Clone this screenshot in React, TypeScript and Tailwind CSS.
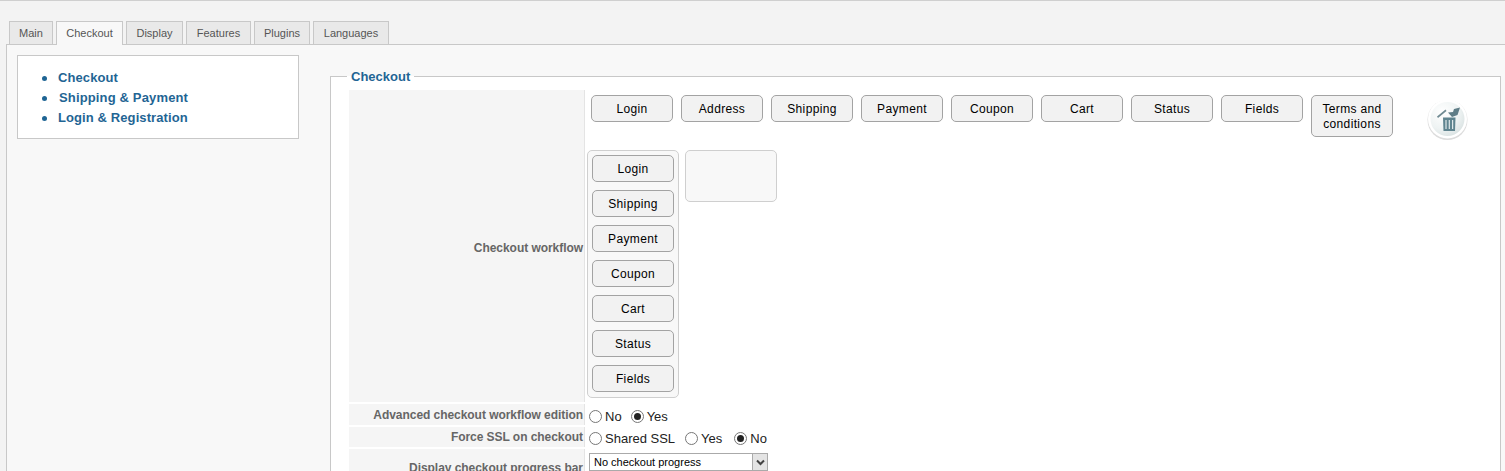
import React from "react";

const tabs = ["Main", "Checkout", "Display", "Features", "Plugins", "Languages"];
const tabWidths = ["w-[44px]", "w-[67px]", "w-[57px]", "w-[65px]", "w-[56px]", "w-[76px]"];
const topButtons = ["Login", "Address", "Shipping", "Payment", "Coupon", "Cart", "Status", "Fields"];
const sortButtons = ["Login", "Shipping", "Payment", "Coupon", "Cart", "Status", "Fields"];

function Btn({ label }: { label: string }) {
  return (
    <div className="flex h-[27px] w-[82px] shrink-0 items-center justify-center rounded-[5px] border border-[#a3a3a3] bg-[#f2f2f2] text-[12px] tracking-[0.35px] text-black">
      {label}
    </div>
  );
}

function Radio({ checked }: { checked?: boolean }) {
  return (
    <span className="mr-[3px] flex h-[13px] w-[13px] shrink-0 items-center justify-center rounded-full border border-[#777] bg-white">
      {checked && <span className="h-[7px] w-[7px] rounded-full bg-[#222]" />}
    </span>
  );
}

function RadioItem({ label, checked, className = "" }: { label: string; checked?: boolean; className?: string }) {
  return (
    <span className={`flex items-center text-[13px] leading-[14px] text-[#222] ${className}`}>
      <Radio checked={checked} />
      <span className="pt-[1px]">{label}</span>
    </span>
  );
}

function TrashIcon() {
  return (
    <svg width="44" height="44" viewBox="0 0 44 44" className="shrink-0">
      <defs>
        <radialGradient id="disc" cx="35%" cy="30%" r="75%">
          <stop offset="0%" stopColor="#ffffff" />
          <stop offset="65%" stopColor="#eef3f3" />
          <stop offset="100%" stopColor="#dbe3e3" />
        </radialGradient>
      </defs>
      <circle cx="22.5" cy="23" r="20" fill="#dcdcdc" />
      <circle cx="22.5" cy="22" r="19.5" fill="#ffffff" />
      <circle cx="22.5" cy="22" r="17" fill="url(#disc)" />
      <path d="M12 19.5 L20.5 12.5 L21.5 14 L13 21 Z" fill="#6f8a92" />
      <path d="M23 15.5 L28 15 L29 12 L35 10.5 L32.5 18 L27 20 Z" fill="#5f7d87" />
      <path d="M18 20.5 H30.5 L30 34 H18.5 Z" fill="#5f848f" />
      <path d="M21 23 V32 M24.3 23 V32 M27.6 23 V32" stroke="#dfe8ea" strokeWidth="1.2" />
    </svg>
  );
}

function Row({
  label,
  className,
  labelClass = "",
  children,
}: {
  label: string;
  className: string;
  labelClass?: string;
  children: React.ReactNode;
}) {
  return (
    <div className={`flex ${className}`}>
      <div
        className={`flex w-[236px] shrink-0 items-center justify-end border-r border-[#e4e4e4] bg-[#f5f5f5] pr-[1px] text-[12px] font-bold tracking-[-0.05px] text-[#666] ${labelClass}`}
      >
        {label}
      </div>
      <div className="min-w-0 flex-1 bg-white">{children}</div>
    </div>
  );
}

export default function App() {
  return (
    <div className="h-[471px] overflow-hidden border-t border-[#cfcfcf] bg-[#f3f3f3] font-['Liberation_Sans',Arial,sans-serif]">
      <div className="flex h-[43px] items-end gap-[3px] pl-[9px]">
        {tabs.map((t, i) => (
          <div
            key={t}
            className={`${tabWidths[i]} relative flex items-center justify-center border border-[#c8c8c8] text-[11px] text-[#555] ${
              t === "Checkout" ? "z-10 -mb-px h-[24px] border-b-0 bg-[#f8f8f8]" : "h-[23px] border-b-0 bg-[#e9e9e9]"
            }`}
          >
            {t}
          </div>
        ))}
      </div>
      <div className="ml-[6px] flex h-[430px] gap-[31px] border-t border-l border-[#c8c8c8] bg-[#f8f8f8] pt-[10px] pl-[10px]">
        <div className="h-[84px] w-[282px] shrink-0 border border-[#c8c8c8] bg-white pt-[12px] pl-[24px]">
          <ul className="list-none">
            <li className="flex h-[20px] items-center text-[13px] font-bold tracking-[0.1px] text-[#1f6594]">
              <span className="mr-[11px] h-[5px] w-[5px] rounded-full bg-[#1f6594]" />
              Checkout
            </li>
            <li className="flex h-[20px] items-center text-[13px] font-bold tracking-[0.15px] text-[#1f6594]">
              <span className="mr-[12px] h-[5px] w-[5px] rounded-full bg-[#1f6594]" />
              Shipping &amp; Payment
            </li>
            <li className="flex h-[20px] items-center text-[13px] font-bold tracking-[0.1px] text-[#1f6594]">
              <span className="mr-[11px] h-[5px] w-[5px] rounded-full bg-[#1f6594]" />
              Login &amp; Registration
            </li>
          </ul>
        </div>
        <fieldset className="mt-[14px] mr-[4px] min-w-0 flex-1 border border-[#c8c8c8] bg-white pl-[18px]">
          <legend className="-ml-[2px] px-[4px] text-[13px] leading-[15px] font-bold text-[#1f6594]">Checkout</legend>
          <div className="flex flex-col gap-[2px] pt-[6px]">
            <Row label="Checkout workflow" className="h-[312px]" labelClass="pt-[3px]">
              <div className="flex gap-[8px] pt-[5px] pl-[6px]">
                {topButtons.map((b) => (
                  <Btn key={b} label={b} />
                ))}
                <div className="flex h-[42px] w-[82px] shrink-0 items-center justify-center rounded-[5px] border border-[#a3a3a3] bg-[#f2f2f2] pt-[1px] text-center text-[12px] leading-[15px] tracking-[0.35px] text-black">
                  Terms and conditions
                </div>
                <div className="mt-[2px] ml-[24px]">
                  <TrashIcon />
                </div>
              </div>
              <div className="mt-[9px] flex gap-[6px] pl-[2px]">
                <div className="flex h-[248px] w-[92px] flex-col gap-[8px] rounded-[5px] border border-[#cfcfcf] bg-[#f8f8f8] px-[4px] pt-[4px]">
                  {sortButtons.map((b) => (
                    <Btn key={b} label={b} />
                  ))}
                </div>
                <div className="h-[52px] w-[92px] rounded-[5px] border border-[#cfcfcf] bg-[#f8f8f8]" />
              </div>
            </Row>
            <Row label="Advanced checkout workflow edition" className="h-[21px]">
              <div className="flex h-full items-center gap-[9px] pt-[3px] pl-[4px]">
                <RadioItem label="No" />
                <RadioItem label="Yes" checked />
              </div>
            </Row>
            <Row label="Force SSL on checkout" className="h-[20px]">
              <div className="flex h-full items-center gap-[10px] pt-[3px] pl-[4px]">
                <RadioItem label="Shared SSL" />
                <RadioItem label="Yes" />
                <RadioItem label="No" checked className="ml-[2px]" />
              </div>
            </Row>
            <Row label="Display checkout progress bar" className="h-[38px]">
              <div className="mt-[4px] ml-[4px] flex h-[18px] w-[179px] items-center justify-between border border-[#aaa] bg-white pl-[4px] text-[11px] text-black">
                No checkout progress
                <span className="flex h-[16px] w-[15px] items-center justify-center border-l border-[#aaa] bg-[#e4e4e4]">
                  <svg width="9" height="7" viewBox="0 0 9 7">
                    <path d="M1 1.5 L4.5 5 L8 1.5" fill="none" stroke="#444" strokeWidth="2" />
                  </svg>
                </span>
              </div>
            </Row>
          </div>
        </fieldset>
      </div>
    </div>
  );
}
